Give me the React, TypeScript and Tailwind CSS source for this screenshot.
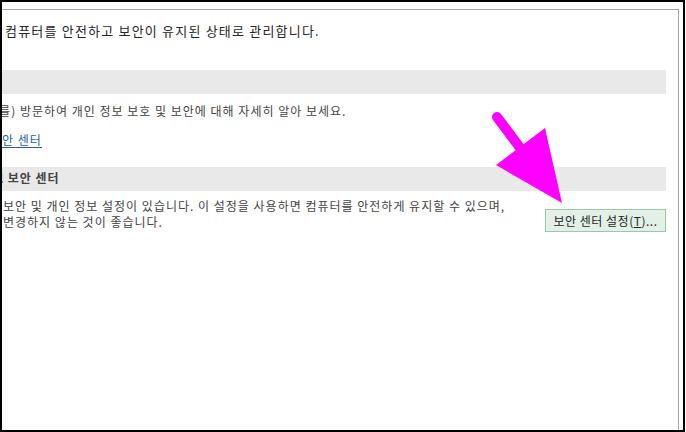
const KR = "font-['Noto_Sans_CJK_KR','Noto_Sans',sans-serif]";

function Band({ children }: { children?: React.ReactNode }) {
  return (
    <div className="h-[24px] bg-[#e9e9e9] flex items-center overflow-hidden whitespace-nowrap pb-[3px]">
      {children}
    </div>
  );
}

function Arrow() {
  return (
    <svg className="absolute left-0 top-0 pointer-events-none" width="686" height="432" viewBox="0 0 686 432">
      <line x1="497" y1="117" x2="524" y2="153" stroke="#ff00ff" strokeWidth="10" strokeLinecap="round" />
      <polygon points="545,128 496,165 562,203" fill="#ff00ff" />
    </svg>
  );
}

export default function App() {
  return (
    <div className={`w-[686px] h-[432px] bg-white relative ${KR}`}>
      <div className="w-[685px] h-[432px] border-2 border-black overflow-hidden">
        <div className="mt-[7px] w-[677px] h-[421px] border-t border-r border-[#a6a6a6] pr-[12px]">
          <div className="overflow-hidden whitespace-nowrap">
            {/* intro line */}
            <p className="mt-[12px] ml-[3px] text-[13px] leading-[18px] tracking-[1.2px] text-[#262626]">
              컴퓨터를 안전하고 보안이 유지된 상태로 관리합니다.
            </p>

            {/* privacy section */}
            <div className="mt-[30px]">
              <Band />
            </div>
            <p className="mt-[9px] ml-[-20px] text-[12px] leading-[16px] tracking-[1px] text-[#444]">
              을(를) 방문하여 개인 정보 보호 및 보안에 대해 자세히 알아 보세요.
            </p>
            <p className="mt-[13px] ml-[-12px] text-[12px] leading-[16px] tracking-[1px]">
              <span className="text-[#1f5fad] underline underline-offset-2">보안 센터</span>
            </p>

            {/* trust center section */}
            <div className="mt-[19px]">
              <Band>
                <span className="ml-[-33px] text-[12px] font-semibold tracking-[1px] text-[#444]">Excel 보안 센터</span>
              </Band>
            </div>
            <div className="mt-[7px] flex items-start justify-between">
              <div className="ml-[1px] text-[12px] leading-[16px] tracking-[1px] text-[#444]">
                <p>보안 및 개인 정보 설정이 있습니다. 이 설정을 사용하면 컴퓨터를 안전하게 유지할 수 있으며,</p>
                <p>변경하지 않는 것이 좋습니다.</p>
              </div>
              <button
                type="button"
                className="mt-[11px] w-[121px] h-[23px] shrink-0 bg-[#e3f0e8] border border-[#98c9ab] text-[12px] tracking-[0.5px] text-[#262626] flex items-center justify-center"
              >
                보안 센터 설정(<span className="underline">T</span>)...
              </button>
            </div>
          </div>
        </div>
      </div>
      <Arrow />
    </div>
  );
}
